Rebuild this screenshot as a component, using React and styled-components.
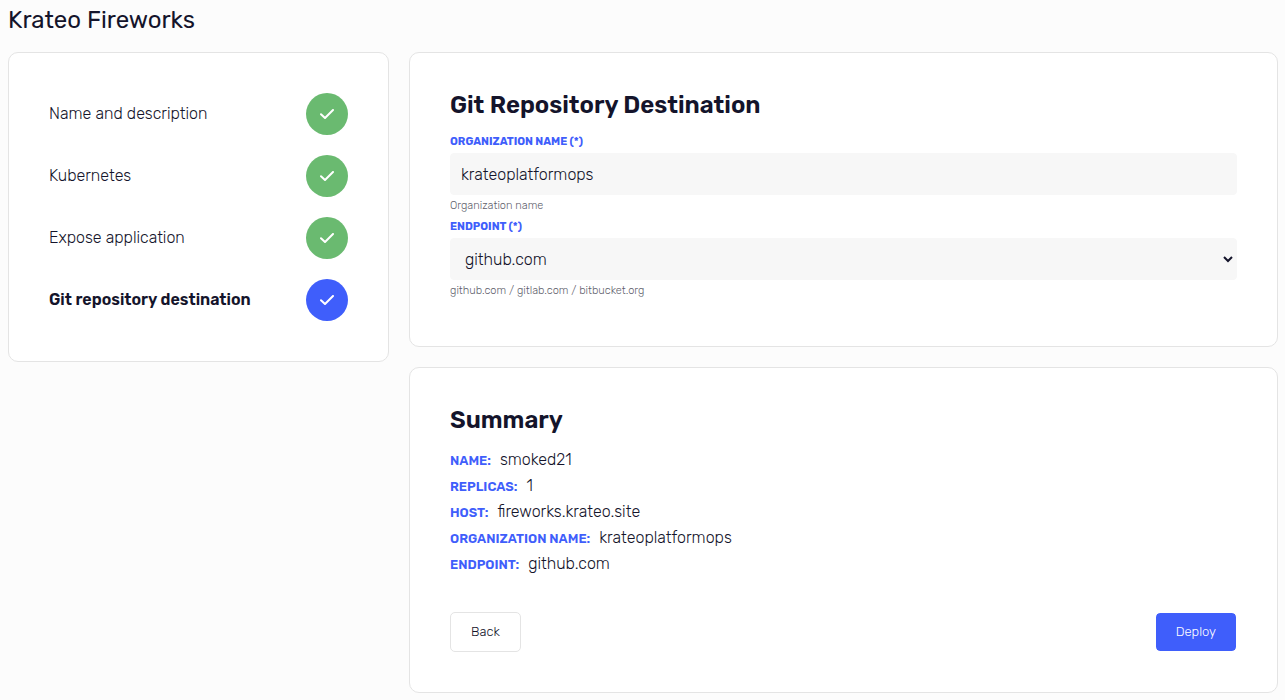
import React, { useId, useState } from "react";
import styled, { createGlobalStyle } from "styled-components";

const color = {
  ink: "#14142b",
  blue: "#3f5efb",
  green: "#6aba70",
  line: "#e4e4e4",
  field: "#f7f7f7",
};

const GlobalStyle = createGlobalStyle`
  *, *::before, *::after { box-sizing: border-box; }
  body {
    margin: 0;
    background: #fcfcfc;
    color: ${color.ink};
    font-family: Rubik, Roboto, sans-serif;
    font-size: 16px;
    font-weight: 300;
  }
`;

const Page = styled.main`
  padding: 8px 7px 7px 8px;
`;

const Title = styled.h1`
  margin: 0 0 20px;
  font-size: 24px;
  line-height: 24px;
  font-weight: 400;
`;

const Columns = styled.div`
  display: grid;
  grid-template-columns: 30% minmax(0, 1fr);
  column-gap: 20px;
  align-items: start;
`;

const Stack = styled.div`
  display: flex;
  flex-direction: column;
  gap: 20px;
`;

const Card = styled.section`
  padding: 40px;
  background: #fff;
  border: 1px solid ${color.line};
  border-radius: 10px;
`;

const Steps = styled.ol`
  display: flex;
  flex-direction: column;
  gap: 20px;
  margin: 0;
  padding: 0;
  list-style: none;
`;

const Step = styled.li`
  display: flex;
  align-items: center;
  justify-content: space-between;
  font-weight: ${(p) => (p.$active ? 600 : 300)};
`;

const StepName = styled.span`
  padding-bottom: 2px;
`;

const Badge = styled.span`
  display: flex;
  align-items: center;
  justify-content: center;
  width: 42px;
  height: 42px;
  border-radius: 50%;
  color: #fff;
  background: ${(p) => (p.$active ? color.blue : color.green)};
`;

const Heading = styled.h2`
  margin: 0 0 15px;
  font-size: 24px;
  line-height: 24px;
  font-weight: 600;
`;

const Fields = styled.div`
  display: flex;
  flex-direction: column;
  gap: 10px;
  padding: 4px 0 10px;
`;

const FieldBox = styled.div`
  display: flex;
  flex-direction: column;
  gap: 5px;
`;

const Label = styled.label`
  font-size: 11px;
  line-height: 12px;
  font-weight: 700;
  text-transform: uppercase;
  color: ${color.blue};
`;

const Input = styled.input`
  width: 100%;
  height: 42px;
  padding: 0 10px;
  border: 1px solid ${color.field};
  border-radius: 4px;
  background: ${color.field};
  color: inherit;
  font: inherit;
`;

const Select = styled.select`
  width: 100%;
  height: 42px;
  padding: 0 0 0 10px;
  border: 1px solid ${color.field};
  border-radius: 4px;
  background: ${color.field};
  color: inherit;
  font: inherit;
`;

const Hint = styled.small`
  font-size: 11px;
  line-height: 11px;
  font-weight: 300;
  color: ${color.ink};
  opacity: 0.7;
`;

const SummaryList = styled.dl`
  margin: 0;
`;

const SummaryRow = styled.div`
  display: flex;
  align-items: baseline;
  gap: 9px;
`;

const Term = styled.dt`
  font-size: 13px;
  line-height: 16px;
  font-weight: 600;
  text-transform: uppercase;
  color: ${color.blue};
`;

const Value = styled.dd`
  margin: 0;
  line-height: 26px;
`;

const Actions = styled.div`
  display: flex;
  justify-content: space-between;
  margin-top: 35px;
`;

const Button = styled.button`
  height: 40px;
  padding: 0 20px 2px;
  border: 1px solid ${(p) => (p.$primary ? "#fff" : color.line)};
  border-radius: 5px;
  background: ${(p) => (p.$primary ? color.blue : "#fff")};
  background-clip: padding-box;
  color: ${(p) => (p.$primary ? "#fff" : color.ink)};
  font-family: inherit;
  font-size: 13px;
  font-weight: 300;
  cursor: pointer;
`;

function Check() {
  return (
    <svg width="14" height="10" viewBox="0 0 14 10" fill="none" aria-hidden="true">
      <path
        d="M1 5.2 L5 9 L13 1"
        stroke="currentColor"
        strokeWidth="2"
        strokeLinecap="round"
        strokeLinejoin="round"
      />
    </svg>
  );
}

function Field({ label, hint, children }) {
  const id = useId();
  return (
    <FieldBox>
      <Label htmlFor={id}>{label}</Label>
      {children(id)}
      <Hint>{hint}</Hint>
    </FieldBox>
  );
}

const steps = [
  "Name and description",
  "Kubernetes",
  "Expose application",
  "Git repository destination",
];

export default function App() {
  const [organization, setOrganization] = useState("krateoplatformops");
  const [endpoint, setEndpoint] = useState("github.com");
  const current = steps.length - 1;
  const summary = [
    ["Name", "smoked21"],
    ["Replicas", "1"],
    ["Host", "fireworks.krateo.site"],
    ["Organization name", organization],
    ["Endpoint", endpoint],
  ];

  return (
    <Page>
      <GlobalStyle />
      <Title>Krateo Fireworks</Title>
      <Columns>
        <Card>
          <Steps>
            {steps.map((name, i) => (
              <Step key={name} $active={i === current}>
                <StepName>{name}</StepName>
                <Badge $active={i === current}>
                  <Check />
                </Badge>
              </Step>
            ))}
          </Steps>
        </Card>
        <Stack>
          <Card>
            <Heading>Git Repository Destination</Heading>
            <Fields>
              <Field label="Organization name (*)" hint="Organization name">
                {(id) => (
                  <Input
                    id={id}
                    type="text"
                    value={organization}
                    onChange={(e) => setOrganization(e.target.value)}
                  />
                )}
              </Field>
              <Field label="Endpoint (*)" hint="github.com / gitlab.com / bitbucket.org">
                {(id) => (
                  <Select id={id} value={endpoint} onChange={(e) => setEndpoint(e.target.value)}>
                    <option>github.com</option>
                    <option>gitlab.com</option>
                    <option>bitbucket.org</option>
                  </Select>
                )}
              </Field>
            </Fields>
          </Card>
          <Card>
            <Heading>Summary</Heading>
            <SummaryList>
              {summary.map(([term, value]) => (
                <SummaryRow key={term}>
                  <Term>{term}:</Term>
                  <Value>{value}</Value>
                </SummaryRow>
              ))}
            </SummaryList>
            <Actions>
              <Button type="button">Back</Button>
              <Button type="button" $primary>
                Deploy
              </Button>
            </Actions>
          </Card>
        </Stack>
      </Columns>
    </Page>
  );
}
